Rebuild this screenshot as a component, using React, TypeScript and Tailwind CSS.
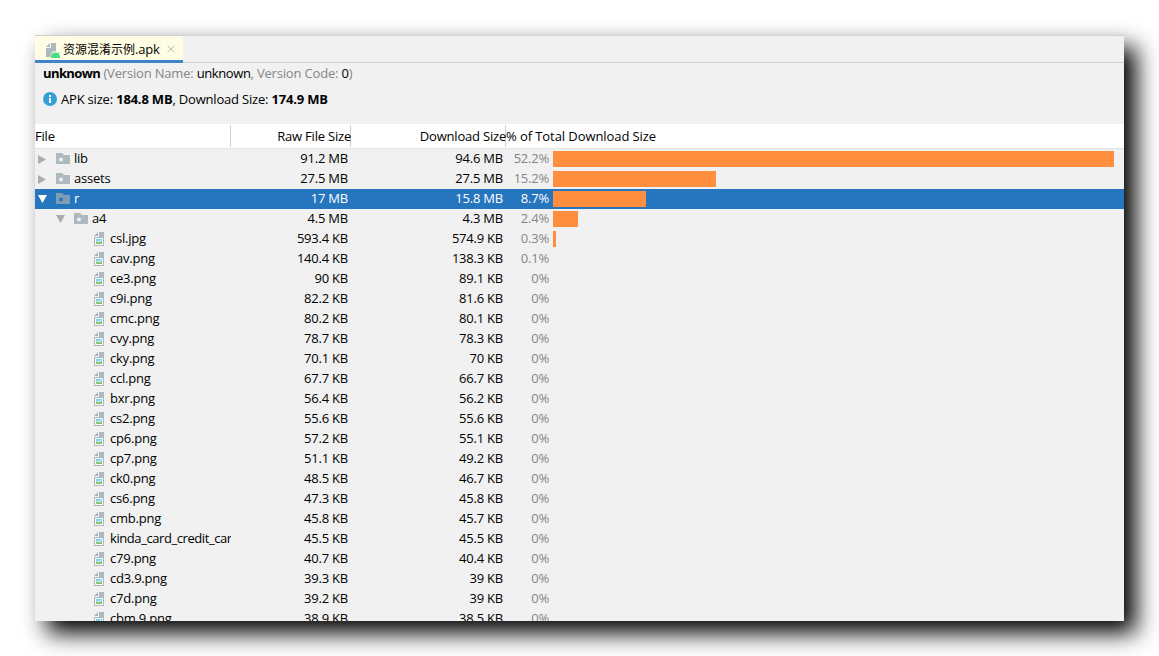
import clsx from 'clsx';

type Row = {
  name: string;
  raw: string;
  download: string;
  percent: string;
  bar?: number;
  depth?: number;
  type?: 'folder' | 'image';
  open?: boolean;
  selected?: boolean;
};

const rows: Row[] = [
  { name: 'lib', raw: '91.2 MB', download: '94.6 MB', percent: '52.2%', bar: 561, type: 'folder' },
  { name: 'assets', raw: '27.5 MB', download: '27.5 MB', percent: '15.2%', bar: 163, type: 'folder' },
  { name: 'r', raw: '17 MB', download: '15.8 MB', percent: '8.7%', bar: 93, type: 'folder', open: true, selected: true },
  { name: 'a4', raw: '4.5 MB', download: '4.3 MB', percent: '2.4%', bar: 25, type: 'folder', open: true, depth: 1 },
  { name: 'csl.jpg', raw: '593.4 KB', download: '574.9 KB', percent: '0.3%', bar: 3 },
  { name: 'cav.png', raw: '140.4 KB', download: '138.3 KB', percent: '0.1%' },
  { name: 'ce3.png', raw: '90 KB', download: '89.1 KB', percent: '0%' },
  { name: 'c9i.png', raw: '82.2 KB', download: '81.6 KB', percent: '0%' },
  { name: 'cmc.png', raw: '80.2 KB', download: '80.1 KB', percent: '0%' },
  { name: 'cvy.png', raw: '78.7 KB', download: '78.3 KB', percent: '0%' },
  { name: 'cky.png', raw: '70.1 KB', download: '70 KB', percent: '0%' },
  { name: 'ccl.png', raw: '67.7 KB', download: '66.7 KB', percent: '0%' },
  { name: 'bxr.png', raw: '56.4 KB', download: '56.2 KB', percent: '0%' },
  { name: 'cs2.png', raw: '55.6 KB', download: '55.6 KB', percent: '0%' },
  { name: 'cp6.png', raw: '57.2 KB', download: '55.1 KB', percent: '0%' },
  { name: 'cp7.png', raw: '51.1 KB', download: '49.2 KB', percent: '0%' },
  { name: 'ck0.png', raw: '48.5 KB', download: '46.7 KB', percent: '0%' },
  { name: 'cs6.png', raw: '47.3 KB', download: '45.8 KB', percent: '0%' },
  { name: 'cmb.png', raw: '45.8 KB', download: '45.7 KB', percent: '0%' },
  { name: 'kinda_card_credit_card.png', raw: '45.5 KB', download: '45.5 KB', percent: '0%' },
  { name: 'c79.png', raw: '40.7 KB', download: '40.4 KB', percent: '0%' },
  { name: 'cd3.9.png', raw: '39.3 KB', download: '39 KB', percent: '0%' },
  { name: 'c7d.png', raw: '39.2 KB', download: '39 KB', percent: '0%' },
  { name: 'cbm.9.png', raw: '38.9 KB', download: '38.5 KB', percent: '0%' },
];

const FolderIcon = ({ selected }: { selected?: boolean }) => (
  <svg width="14" height="12" viewBox="0 0 14 12" className="mr-1 ml-[9px] shrink-0">
    <path d="M0 0h6l2 2h6v9H0z" fill={selected ? '#7f9db5' : '#adb8bf'} />
    <circle cx="5" cy="6.500" r="2" fill={selected ? '#2675bf' : '#f1f1f1'} />
  </svg>
);

const ImageIcon = () => (
  <svg width="10" height="14" viewBox="0 0 10 14" className="mr-1.5 shrink-0">
    <path d="M4 0v4H0z" fill="#adb8bf" />
    <path d="M5 0h5v14H0V5h5z" fill="#adb8bf" />
    <path d="M1 6h8v7H1z" fill="#f8fafb" />
    <path d="M2 7h6v5H2z" fill="#7fd0ea" />
    <path d="M2 10.500l2-1 2 1 2-1V12H2z" fill="#8cc270" />
    <path d="M3 9h3V8h1v1h-1v.7H3z" fill="#fff" />
  </svg>
);

const ApkIcon = () => (
  <svg width="14" height="15" viewBox="0 0 14 15" className="mt-[3px] shrink-0">
    <path d="M4 0v4H0z" fill="#adb8bf" />
    <path d="M5 0h5v8.500H6L4.500 14H0V5h5z" fill="#adb8bf" />
    <path d="M6 9l1.200 1.200a5 5 0 0 1 4.600 0L13 9l.6.5-1.100 1.300A5 5 0 0 1 14 15H5a5 5 0 0 1 1.500-4.200L5.400 9.500z" fill="#3ddc84" />
    <path d="M7 12.500h1v1H7zM11 12.500h1v1h-1z" fill="#a5eebc" />
  </svg>
);

const InfoIcon = () => (
  <svg width="14" height="14" viewBox="0 0 14 14" className="shrink-0">
    <circle cx="7" cy="7" r="7" fill="#389fd6" />
    <path d="M6 3h2v2H6zM6 6h2v5H6z" fill="#fff" />
  </svg>
);

const Arrow = ({ open, selected }: { open?: boolean; selected?: boolean }) => (
  <svg width="9" height="10" viewBox="0 0 9 10" className="shrink-0">
    <path d={open ? 'M0 1h9L4.500 9z' : 'M0 1v9l8-4.500z'} fill={selected ? '#fff' : '#acacac'} />
  </svg>
);

const TreeRow = ({ row }: { row: Row }) => (
  <div className={clsx('flex h-5 shrink-0 items-center leading-[18px]', row.selected && 'bg-[#2675bf] text-white')}>
    <div
      className={clsx(
        'flex h-5 w-[196px] shrink-0 items-center overflow-hidden whitespace-nowrap',
        row.type !== 'folder' ? 'pl-[59px]' : row.depth ? 'pl-[21px]' : 'pl-[3px]'
      )}
    >
      {row.type === 'folder' ? (
        <>
          <Arrow open={row.open} selected={row.selected} />
          <FolderIcon selected={row.selected} />
        </>
      ) : (
        <ImageIcon />
      )}
      <span className={clsx('pb-0.5', row.name.length > 10 && 'tracking-[-0.42px]')}>{row.name}</span>
    </div>
    <div className="w-[117px] shrink-0 pb-0.5 text-right">{row.raw}</div>
    <div className="w-[155px] shrink-0 pb-0.5 text-right">{row.download}</div>
    <div className={clsx('w-[46px] shrink-0 pb-0.5 text-right', !row.selected && 'text-[#868686]')}>{row.percent}</div>
    {row.bar && <div className="ml-1 h-4 bg-[#ff8e3e]" style={{ width: row.bar }} />}
  </div>
);

export default function App() {
  return (
    <div className="h-[656px] w-[1159px] overflow-hidden bg-white pt-[35px] pl-[35px]">
      <div className="flex h-[586px] w-[1089px] flex-col bg-[#f1f1f1] font-['Open_Sans','Noto_Sans_CJK_SC',sans-serif] text-[13px] leading-5 tracking-[-0.22px] text-black shadow-[12px_12px_22px_#000]">
        <div className="flex h-7 shrink-0 border-t border-b border-[#d0d0d0]">
          <div className="z-10 flex h-[27px] w-[148px] items-center border-b-3 border-[#4083c9] bg-[#fffde4] pt-0.5 pl-[11px] whitespace-nowrap">
            <ApkIcon />
            <span className="mt-px ml-[3px]">
              <span className="text-[12px] tracking-normal">资源混淆示例</span>.apk
            </span>
            <svg width="8" height="8" viewBox="0 0 8 8" className="ml-[7px] shrink-0">
              <path d="M.5.5l7 7M7.500.5l-7 7" stroke="#bfbfb2" />
            </svg>
          </div>
        </div>
        <div className="h-[61px] shrink-0 pl-2">
          <div className="tracking-[-0.18px] text-[#868686]">
            <b className="tracking-[-0.6px] text-black">unknown</b> (Version Name: <span className="tracking-[-0.4px] text-black">unknown</span>, Version Code: <span className="text-black">0</span>)
          </div>
          <div className="mt-1.5 flex items-center gap-1 tracking-[-0.19px]">
            <InfoIcon />
            <span>APK size: <b>184.8 MB</b>, Download Size: <b>174.9 MB</b></span>
          </div>
        </div>
        <div className="flex h-[25px] shrink-0 items-center border-b border-[#e3e3e3] bg-white leading-[22px] tracking-[-0.2px] whitespace-nowrap">
          <div className="h-[22px] w-[196px] border-r border-[#d0d0d0]">File</div>
          <div className="h-[22px] w-[120px] border-r border-[#d0d0d0] text-right"><span className="-mr-px">Raw File Size</span></div>
          <div className="h-[22px] w-[155px] border-r border-[#d0d0d0] text-right"><span className="-mr-px">Download Size</span></div>
          <div className="tracking-[-0.08px]">% of Total Download Size</div>
        </div>
        <div className="flex min-h-0 flex-col overflow-hidden">
          {rows.map((row) => (
            <TreeRow key={row.name} row={row} />
          ))}
        </div>
      </div>
    </div>
  );
}
